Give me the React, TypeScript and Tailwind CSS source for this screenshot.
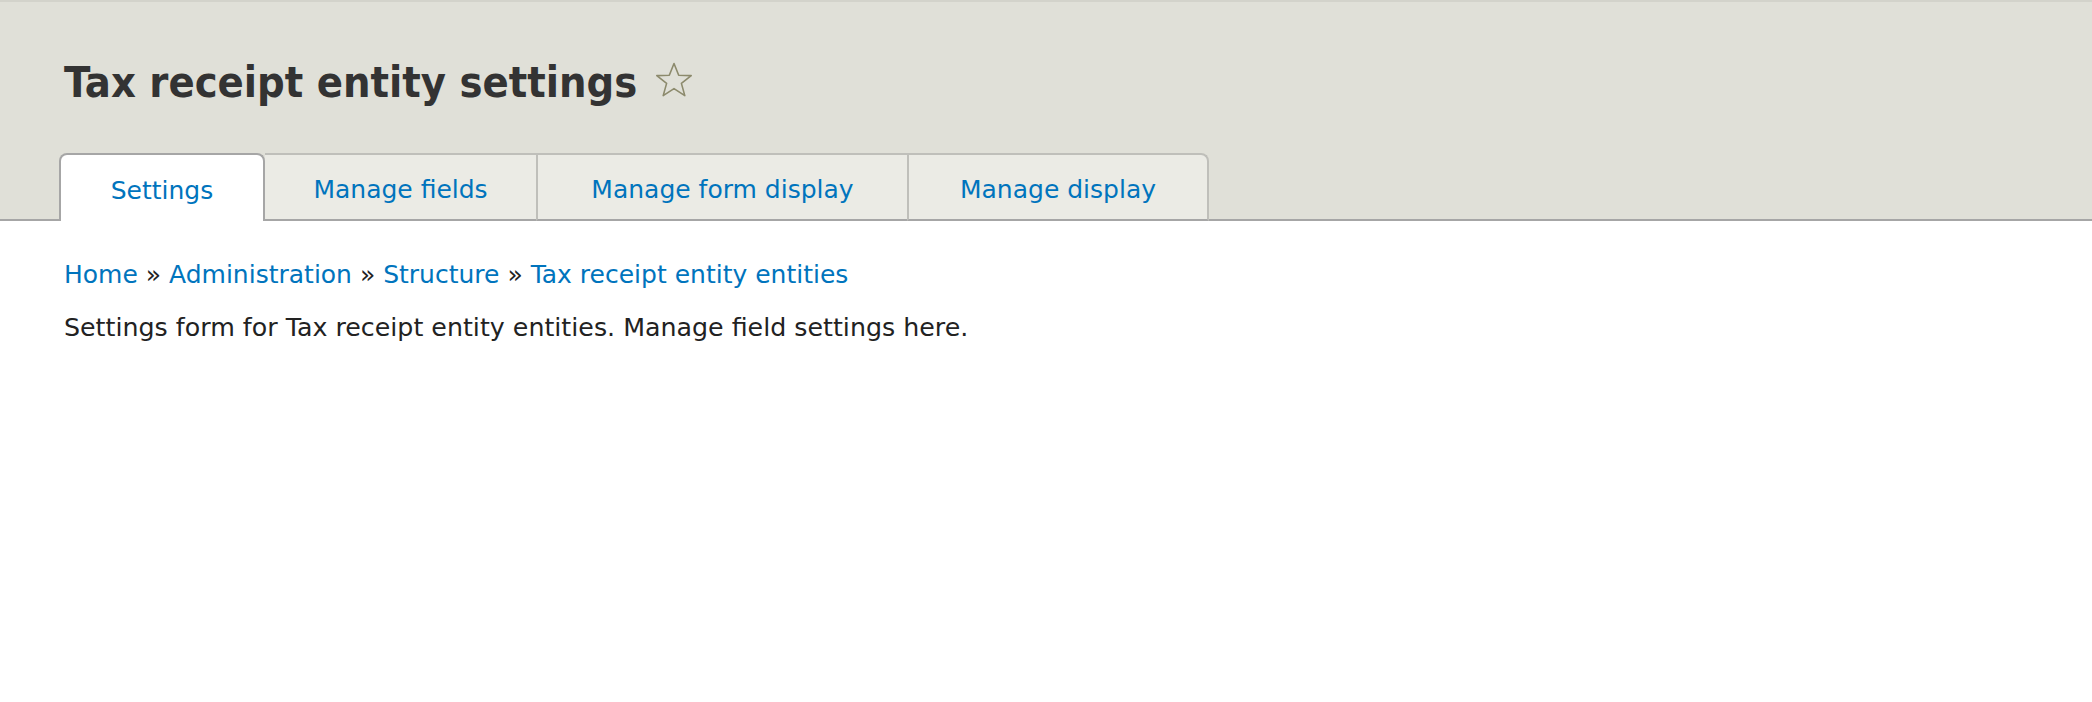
import React from "react";

const tabs = [
  { label: "Settings", w: "w-[206px]", active: true },
  { label: "Manage fields", w: "w-[271px]", active: false },
  { label: "Manage form display", w: "w-[371px]", active: false },
  { label: "Manage display", w: "w-[302px]", active: false },
];

function Star() {
  return (
    <svg width="38" height="36" viewBox="0 0 38 36" className="ml-[18px] mt-[5px] shrink-0">
      <polygon
        points="19,1.5 23.7,13.2 36.2,13.6 26.4,21.4 29.8,33.6 19,26.6 8.2,33.6 11.6,21.4 1.8,13.6 14.3,13.2"
        fill="none"
        stroke="#8c8a6c"
        strokeWidth="1.6"
        strokeLinejoin="round"
      />
    </svg>
  );
}

export default function App() {
  return (
    <div className="min-h-[702px] bg-white font-['DejaVu_Sans',sans-serif] text-[#222]">
      <header className="bg-[#e0e0d8] border-t-2 border-t-[#d3d3cb] border-b-2 border-b-[#a6a6a6]">
        <div className="pl-[64px] pt-[55px] flex items-start">
          <h1 className="font-['DejaVu_Sans_Condensed',sans-serif] text-[43px] leading-[50px] font-bold text-[#333]">
            Tax receipt entity settings
          </h1>
          <Star />
        </div>
        <ul className="flex pl-[59px] mt-[46px] -mb-[2px]">
          {tabs.map((t, i) => (
            <li
              key={t.label}
              className={
                t.active
                  ? `${t.w} h-[68px] bg-white border-2 border-b-0 border-[#a6a6a6] rounded-t-[8px] flex items-center justify-center`
                  : `${t.w} h-[68px] bg-[#ebebe5] border-t-2 border-[#bfbfba] ${i > 1 ? "border-l-2" : ""} ${i === tabs.length - 1 ? "border-r-2 rounded-tr-[8px]" : ""} flex items-center justify-center border-b-2 border-b-[#a6a6a6]`
              }
            >
              <a className="text-[25px] text-[#0074bd] leading-none pt-[4px]">{t.label}</a>
            </li>
          ))}
        </ul>
      </header>
      <div className="px-[64px] pt-[38px]">
        <nav className="text-[25px] leading-[32px]">
          <a className="text-[#0074bd]">Home</a> » <a className="text-[#0074bd]">Administration</a> »{" "}
          <a className="text-[#0074bd]">Structure</a> » <a className="text-[#0074bd]">Tax receipt entity entities</a>
        </nav>
        <p className="mt-[21px] text-[25.3px] leading-[32px] text-[#222]">
          Settings form for Tax receipt entity entities. Manage field settings here.
        </p>
      </div>
    </div>
  );
}
